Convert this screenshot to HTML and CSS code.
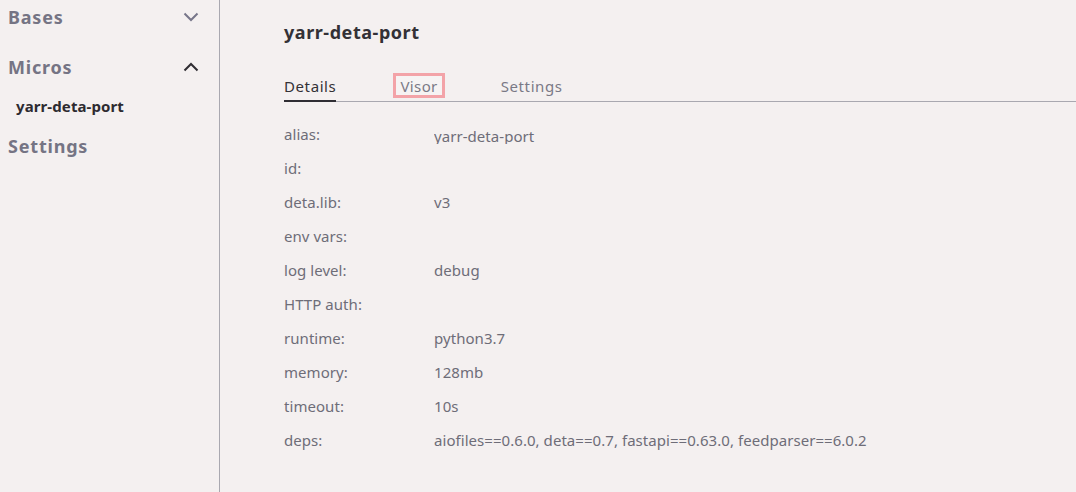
FILE: index.html
```html
<!DOCTYPE html>
<html>
<head>
<meta charset="utf-8">
<link rel="stylesheet" href="styles.css">
</head>
<body>
<div class="app">
  <aside class="sidebar">
    <div class="section">
      <span class="section-title">Bases</span>
      <svg class="chev chev-down" width="16" height="10" viewBox="0 0 16 10"><path d="M1.5 1.5 L8 8 L14.5 1.5" fill="none" stroke="currentColor" stroke-width="2"/></svg>
    </div>
    <div class="section micros">
      <span class="section-title">Micros</span>
      <svg class="chev chev-up" width="16" height="10" viewBox="0 0 16 10"><path d="M1.5 8.5 L8 2 L14.5 8.5" fill="none" stroke="currentColor" stroke-width="2"/></svg>
    </div>
    <div class="item">yarr-deta-port</div>
    <div class="section">
      <span class="section-title">Settings</span>
    </div>
  </aside>
  <main class="main">
    <h1 class="title">yarr-deta-port</h1>
    <nav class="tabs">
      <span class="tab active">Details</span>
      <span class="tab focus">Visor</span>
      <span class="tab">Settings</span>
    </nav>
    <dl class="details">
      <div class="row"><dt>alias:</dt><dd><span class="field">yarr-deta-port</span></dd></div>
      <div class="row"><dt>id:</dt><dd></dd></div>
      <div class="row"><dt>deta.lib:</dt><dd>v3</dd></div>
      <div class="row"><dt>env vars:</dt><dd></dd></div>
      <div class="row"><dt>log level:</dt><dd>debug</dd></div>
      <div class="row"><dt>HTTP auth:</dt><dd></dd></div>
      <div class="row"><dt>runtime:</dt><dd>python3.7</dd></div>
      <div class="row"><dt>memory:</dt><dd>128mb</dd></div>
      <div class="row"><dt>timeout:</dt><dd>10s</dd></div>
      <div class="row"><dt>deps:</dt><dd>aiofiles==0.6.0, deta==0.7, fastapi==0.63.0, feedparser==6.0.2</dd></div>
    </dl>
  </main>
</div>
</body>
</html>
```

FILE: styles.css
```css
html, body {
  margin: 0;
  padding: 0;
  background: #f4f0f0;
  font-family: "Noto Sans", "Open Sans", sans-serif;
}
.app {
  display: flex;
  height: 492px;
  overflow: hidden;
}
.sidebar {
  width: 219px;
  border-right: 1px solid #a9a8b0;
  flex-shrink: 0;
}
.section {
  display: flex;
  align-items: center;
  justify-content: space-between;
  padding: 0 20px 0 8px;
  height: 34px;
}
.micros {
  margin-top: 16px;
}
.section-title {
  font-size: 18px;
  font-weight: 700;
  color: #757484;
  letter-spacing: 0.8px;
}
.chev-down { color: #77768a; }
.chev-up { color: #2f2d33; }
.item {
  font-size: 15px;
  font-weight: 700;
  color: #2d2b30;
  padding-left: 16px;
  height: 44px;
  line-height: 44px;
  letter-spacing: 0.1px;
}
.item + .section { margin-top: 1px; }
.main {
  flex: 1;
  padding-left: 64px;
}
.title {
  margin: 19px 0 0 0;
  font-size: 18px;
  font-weight: 700;
  color: #333136;
  line-height: 26px;
  letter-spacing: 0.55px;
}
.tabs {
  display: flex;
  margin-top: 30px;
  border-bottom: 1px solid #a9a8b0;
  height: 26px;
}
.tab {
  font-size: 15px;
  color: #7a7986;
  line-height: 22px;
  height: 25px;
  box-sizing: border-box;
  letter-spacing: 0.6px;
}
.tab.active {
  color: #333136;
  border-bottom: 2px solid #2f2d33;
  height: 27px;
  margin-bottom: -1px;
}
.tab.focus {
  margin-left: 57px;
  margin-top: -2px;
  height: 25px;
  line-height: 20px;
  padding: 0 4px;
  border: 3px solid #f3a3a8;
  background: #f6f3f3;
  letter-spacing: 0.4px;
}
.tab.focus + .tab {
  margin-left: 56px;
}
.details {
  margin: 19px 0 0 0;
}
.row {
  display: flex;
  height: 34px;
  font-size: 15px;
  line-height: 26px;
  color: #6e6d78;
  letter-spacing: 0.05px;
}
.row dt {
  width: 150px;
}
.row dd {
  margin: 0;
}
.field {
  display: inline-block;
  height: 23px;
  overflow: hidden;
  padding-right: 20px;
  line-height: 30px;
  box-shadow: 10px 10px 16px -12px rgba(0,0,0,0.12);
}
```
